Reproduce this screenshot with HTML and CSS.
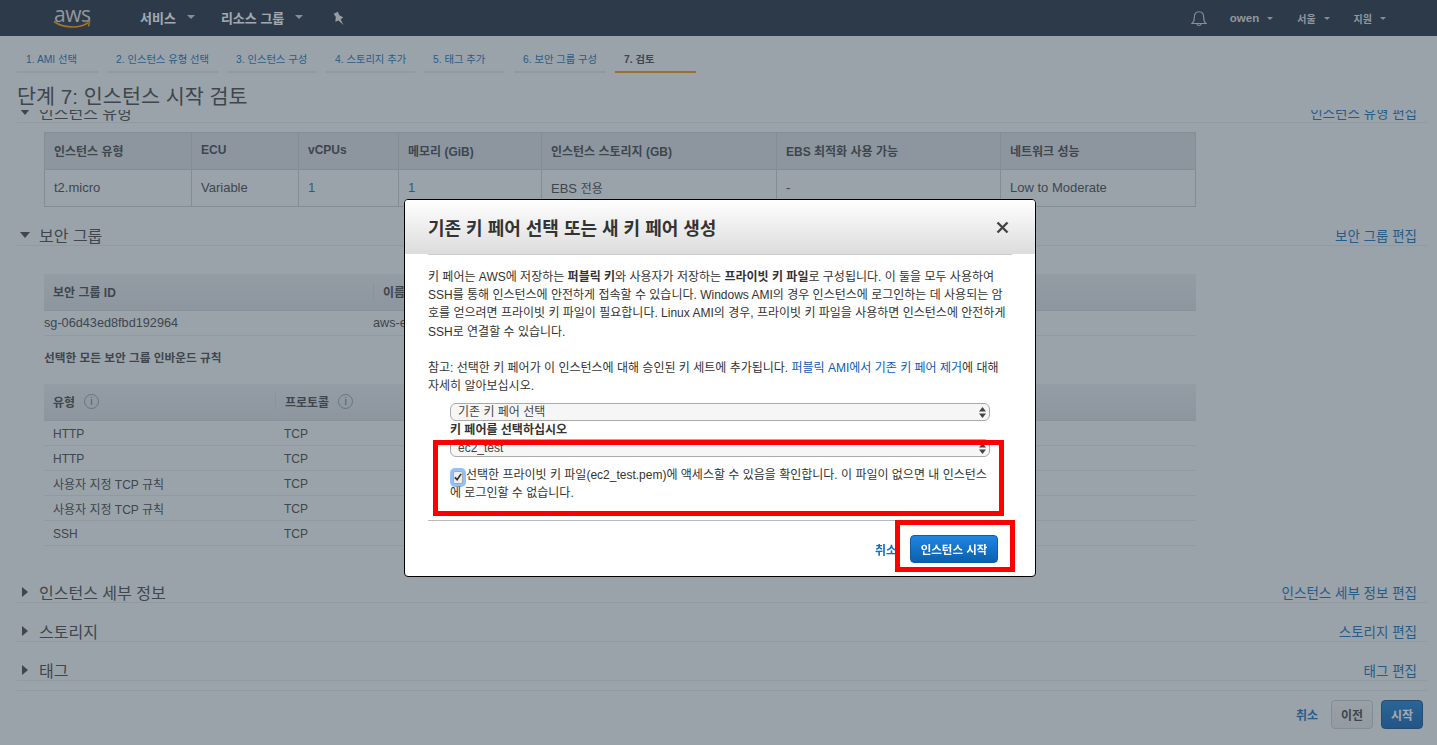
FILE: index.html
```html
<!DOCTYPE html>
<html lang="ko">
<head>
    <meta charset="UTF-8">
    <meta name="viewport" content="width=device-width, initial-scale=1.0">
    <title>인스턴스 시작 검토</title>
    <link rel="stylesheet" href="styles.css">
</head>
<body>
    <header class="nav">
        <div class="logo">
            <span class="logo-text">aws</span>
            <svg class="logo-smile" width="38" height="10" viewBox="0 0 38 10"><path d="M1 1.500C10 8 25 9 35 3" fill="none" stroke="#f90" stroke-width="1.700"/><path d="M30.500 1.500L36.500 1.200L35.500 6.500" fill="none" stroke="#f90" stroke-width="1.400"/></svg>
        </div>
        <a class="nav-item nav-services">서비스<i class="nav-caret"></i></a>
        <a class="nav-item nav-groups">리소스 그룹<i class="nav-caret"></i></a>
        <svg class="nav-pin" width="13" height="15" viewBox="0 0 12 14"><path d="M1.500 2.500L5.500 .8L6.500 3.800L10.500 6L8 7.800L10.500 13L6 8.800L3 10L3.500 5.500Z" fill="#e8e8e8"/></svg>
        <div class="nav-right">
            <svg class="nav-bell" width="16" height="17" viewBox="0 0 16 17"><path d="M1 13.500C3 12 3.300 10 3.300 7.500C3.300 4 5 1.700 8 1.700S12.700 4 12.700 7.500C12.700 10 13 12 15 13.500Z M6 14C6.300 16 9.700 16 10 14" fill="none" stroke="#ccc" stroke-width="1.100"/></svg>
            <a class="nav-sub nav-owen">owen<i class="nav-caret small"></i></a>
            <a class="nav-sub nav-seoul">서울<i class="nav-caret small"></i></a>
            <a class="nav-sub">지원<i class="nav-caret small"></i></a>
        </div>
    </header>

    <ul class="steps">
        <li class="step step-1">1. AMI 선택</li>
        <li class="step step-2">2. 인스턴스 유형 선택</li>
        <li class="step step-3">3. 인스턴스 구성</li>
        <li class="step step-4">4. 스토리지 추가</li>
        <li class="step step-5">5. 태그 추가</li>
        <li class="step step-6">6. 보안 그룹 구성</li>
        <li class="step step-7 active">7. 검토</li>
    </ul>

    <main class="page">
        <h1 class="page-title">단계 7: 인스턴스 시작 검토</h1>

        <section class="review first">
            <div class="review-head"><h2><i class="tri-down"></i>인스턴스 유형</h2><a>인스턴스 유형 편집</a></div>
            <table class="type-table">
                <colgroup><col class="c1"><col class="c2"><col class="c3"><col class="c4"><col class="c5"><col class="c6"><col></colgroup>
                <thead>
                    <tr><th>인스턴스 유형</th><th>ECU</th><th>vCPUs</th><th>메모리 (GiB)</th><th>인스턴스 스토리지 (GB)</th><th>EBS 최적화 사용 가능</th><th>네트워크 성능</th></tr>
                </thead>
                <tbody>
                    <tr><td>t2.micro</td><td>Variable</td><td class="num">1</td><td class="num">1</td><td>EBS <span class="ko">전용</span></td><td>-</td><td>Low to Moderate</td></tr>
                </tbody>
            </table>
        </section>

        <section class="review">
            <div class="review-head"><h2><i class="tri-down"></i>보안 그룹</h2><a>보안 그룹 편집</a></div>
            <div class="sg-block">
                <div class="sg-head"><span class="sg-id">보안 그룹 ID</span><span class="sg-name">이름</span></div>
                <div class="sg-row"><span class="sg-id">sg-06d43ed8fbd192964</span><span class="sg-name">aws-ec2</span></div>
                <h3 class="rules-title">선택한 모든 보안 그룹 인바운드 규칙</h3>
                <div class="sg-head"><span class="rule-type">유형<i class="info">i</i></span><span class="rule-proto">프로토콜<i class="info">i</i></span></div>
                <div class="rule-row"><span class="rule-type">HTTP</span><span class="rule-cell">TCP</span></div>
                <div class="rule-row"><span class="rule-type">HTTP</span><span class="rule-cell">TCP</span></div>
                <div class="rule-row"><span class="rule-type">사용자 지정 TCP 규칙</span><span class="rule-cell">TCP</span></div>
                <div class="rule-row"><span class="rule-type">사용자 지정 TCP 규칙</span><span class="rule-cell">TCP</span></div>
                <div class="rule-row"><span class="rule-type">SSH</span><span class="rule-cell">TCP</span></div>
            </div>
        </section>

        <section class="review collapsed first-collapsed">
            <div class="review-head"><h2><i class="tri-right"></i>인스턴스 세부 정보</h2><a>인스턴스 세부 정보 편집</a></div>
        </section>
        <section class="review collapsed">
            <div class="review-head"><h2><i class="tri-right"></i>스토리지</h2><a>스토리지 편집</a></div>
        </section>
        <section class="review collapsed">
            <div class="review-head"><h2><i class="tri-right"></i>태그</h2><a>태그 편집</a></div>
        </section>

        <div class="page-actions">
            <a class="cancel">취소</a>
            <button class="btn-prev">이전</button>
            <button class="btn-go">시작</button>
        </div>
    </main>

    <div class="backdrop"></div>

    <div class="modal">
        <div class="modal-head">
            <h2>기존 키 페어 선택 또는 새 키 페어 생성</h2>
            <svg class="modal-close" width="13" height="13" viewBox="0 0 13 13"><path d="M1.500 1.500L11.500 11.500M11.500 1.500L1.500 11.500" stroke="#444" stroke-width="2.400"/></svg>
        </div>
        <div class="modal-body">
            <p>키 페어는 AWS에 저장하는 <b>퍼블릭 키</b>와 사용자가 저장하는 <b>프라이빗 키 파일</b>로 구성됩니다. 이 둘을 모두 사용하여<br>SSH를 통해 인스턴스에 안전하게 접속할 수 있습니다. Windows AMI의 경우 인스턴스에 로그인하는 데 사용되는 암<br>호를 얻으려면 프라이빗 키 파일이 필요합니다. Linux AMI의 경우, 프라이빗 키 파일을 사용하면 인스턴스에 안전하게<br>SSH로 연결할 수 있습니다.<br><br>참고: 선택한 키 페어가 이 인스턴스에 대해 승인된 키 세트에 추가됩니다. <a>퍼블릭 AMI에서 기존 키 페어 제거</a>에 대해<br>자세히 알아보십시오.</p>
            <div class="key-form">
                <div class="fake-select">
                    <span>기존 키 페어 선택</span>
                    <svg width="7" height="11" viewBox="0 0 7 11"><path d="M3.500 0L7 4.500H0ZM0 6.500H7L3.500 11Z" fill="#444"/></svg>
                </div>
                <label class="key-label">키 페어를 선택하십시오</label>
                <div class="fake-select">
                    <span>ec2_test</span>
                    <svg width="7" height="11" viewBox="0 0 7 11"><path d="M3.500 0L7 4.500H0ZM0 6.500H7L3.500 11Z" fill="#444"/></svg>
                </div>
                <p class="ack"><span class="check"><svg width="8" height="8" viewBox="0 0 9 9"><path d="M1 5L3.500 7.500L8 1" fill="none" stroke="#333" stroke-width="1.900"/></svg></span>선택한 프라이빗 키 파일(ec2_test.pem)에 액세스할 수 있음을 확인합니다. 이 파일이 없으면 내 인스턴스<br>에 로그인할 수 없습니다.</p>
            </div>
        </div>
        <div class="modal-foot">
            <a class="modal-cancel">취소</a>
            <button class="modal-launch">인스턴스 시작</button>
        </div>
        <div class="mark mark-form"></div>
        <div class="mark mark-launch"></div>
    </div>
</body>
</html>
```

FILE: styles.css
```css
* {
    box-sizing: border-box;
}
html, body {
    height: 745px;
    overflow: hidden;
}
body {
    margin: 0;
    background: #f2f3f3;
    color: #444;
    font-family: "Liberation Sans", "Noto Sans CJK KR", sans-serif;
    font-size: 12px;
}
a {
    color: #146eb4;
}

/* top bar */
.nav {
    display: flex;
    align-items: center;
    height: 36px;
    background: #232f3e;
    color: #fff;
}
.logo {
    position: relative;
    width: 36px;
    height: 36px;
    margin-left: 54px;
}
.logo-text {
    display: block;
    font-family: "Open Sans", sans-serif;
    font-size: 21px;
    line-height: 24px;
    margin-top: 2px;
    color: #ddd;
    letter-spacing: -0.5px;
}
.logo-smile {
    position: absolute;
    left: -1px;
    top: 20px;
}
.nav-item {
    display: flex;
    align-items: center;
    padding-bottom: 2px;
    color: #fff;
    font-size: 13px;
    font-weight: bold;
}
.nav-services {
    margin-left: 50px;
}
.nav-groups {
    margin-left: 26px;
}
.nav-caret {
    width: 0;
    height: 0;
    margin-left: 11px;
    border-left: 4px solid transparent;
    border-right: 4px solid transparent;
    border-top: 4px solid #ccc;
}
.nav-caret.small {
    margin-left: 8px;
    border-left-width: 3px;
    border-right-width: 3px;
    border-top-width: 3px;
}
.nav-pin {
    margin-left: 29px;
}
.nav-right {
    display: flex;
    align-items: center;
    margin-left: auto;
    padding-right: 51px;
}
.nav-bell {
    margin-right: 23px;
}
.nav-sub {
    display: flex;
    align-items: center;
    color: #ddd;
    font-size: 10px;
    font-weight: bold;
}
.nav-owen {
    margin-right: 24px;
    font-size: 11.500px;
}
.nav-seoul {
    margin-right: 24px;
}

/* wizard steps */
.steps {
    display: flex;
    gap: 9px;
    height: 37px;
    margin: 0;
    padding: 0 0 0 17px;
    list-style: none;
}
.step {
    height: 37px;
    padding: 17px 0 0 9px;
    border-bottom: 2px solid #dfe2e2;
    color: #146eb4;
    font-size: 10.300px;
    line-height: 14px;
    white-space: nowrap;
}
.step-1 { width: 81px; }
.step-2 { width: 111px; }
.step-3 { width: 90px; }
.step-4 { width: 89px; }
.step-5 { width: 81px; }
.step-6 { width: 92px; }
.step-7 { width: 81px; }
.step.active {
    border-bottom-color: #ec9222;
    color: #444;
    font-weight: bold;
}

/* review sections */
.page {
    padding: 0 10px 0 17px;
}
.page-title {
    position: relative;
    z-index: 1;
    height: 37px;
    margin: 0;
    padding-top: 11px;
    background: #f2f3f3;
    font-size: 20.700px;
    font-weight: normal;
    line-height: 26px;
    color: #444;
}
.review.first {
    margin-top: -8px;
}
.review-head {
    display: flex;
    justify-content: space-between;
    align-items: center;
    height: 21px;
    padding: 0 10px 0 3px;
    border-bottom: 1px solid #dfe2e2;
}
.review-head h2 {
    display: flex;
    align-items: center;
    margin: 0;
    font-size: 16px;
    font-weight: normal;
    color: #444;
}
.review-head a {
    font-size: 13.500px;
}
.tri-down, .tri-right {
    display: block;
    width: 0;
    height: 0;
}
.tri-down {
    margin-right: 9px;
    border-left: 5px solid transparent;
    border-right: 5px solid transparent;
    border-top: 6px solid #444;
}
.tri-right {
    margin: 0 11px 0 2px;
    border-top: 5px solid transparent;
    border-bottom: 5px solid transparent;
    border-left: 6px solid #444;
}

.type-table {
    width: 1152px;
    margin: 9px 0 18px 27px;
    border-collapse: collapse;
    table-layout: fixed;
}
.type-table col.c1 { width: 147px; }
.type-table col.c2 { width: 107px; }
.type-table col.c3 { width: 100px; }
.type-table col.c4 { width: 143px; }
.type-table col.c5 { width: 235px; }
.type-table col.c6 { width: 224px; }
.type-table th, .type-table td {
    height: 37px;
    padding: 0 9px;
    border: 1px solid #c6cbcf;
    text-align: left;
    white-space: nowrap;
    font-size: 12px;
}
.type-table th {
    padding-bottom: 2px;
    background: #d8dcdf;
    color: #444;
}
.type-table td {
    padding-bottom: 2px;
    font-size: 13px;
}
.type-table td .ko {
    font-size: 12px;
}
.type-table td.num {
    color: #146eb4;
}

.sg-block {
    width: 1152px;
    margin: 28px 0 0 27px;
}
.sg-head {
    display: flex;
    align-items: center;
    height: 37px;
    padding-bottom: 2px;
    border-bottom: 1px solid #cfd3d6;
    background: linear-gradient(#e4e7e9, #d8dcdf);
    font-weight: bold;
}
.sg-head > span {
    padding-left: 9px;
}
.sg-id {
    width: 329px;
}
.sg-name {
    border-left: 1px solid #d2d6d8;
}
.sg-row {
    display: flex;
    align-items: center;
    height: 25px;
    border-bottom: 1px solid #dfe2e2;
    font-size: 12.700px;
}
.sg-row .sg-name {
    border-left: 0;
}
.rules-title {
    height: 48px;
    margin: 0;
    padding-top: 13px;
    font-size: 11.700px;
    line-height: 18px;
    color: #444;
}
.rule-type {
    display: flex;
    align-items: center;
    width: 231px;
}
.rule-proto {
    display: flex;
    align-items: center;
    border-left: 1px solid #d2d6d8;
}
.rule-row {
    display: flex;
    align-items: center;
    height: 25px;
    padding-top: 1px;
    border-bottom: 1px solid #dfe2e2;
}
.rule-row .rule-type {
    padding-left: 9px;
    font-weight: normal;
}
.rule-cell {
    padding-left: 9px;
}
.info {
    display: block;
    width: 15px;
    height: 15px;
    margin-left: 9px;
    border: 1px solid #999;
    border-radius: 50%;
    color: #777;
    font-family: "Liberation Sans", sans-serif;
    font-size: 11px;
    font-style: normal;
    font-weight: normal;
    line-height: 13px;
    text-align: center;
}

.first-collapsed {
    margin-top: 36px;
}
.collapsed + .collapsed {
    margin-top: 18px;
}
.page-actions {
    display: flex;
    justify-content: flex-end;
    align-items: center;
    gap: 8px;
    margin-top: 9px;
    padding: 9px 4px 0 0;
    border-top: 1px solid #dfe2e2;
}
.cancel {
    margin-right: 5px;
    font-weight: bold;
}
.btn-prev, .btn-go {
    width: 42px;
    height: 29px;
    padding: 0;
    border-radius: 4px;
    font-family: inherit;
    font-size: 12px;
    font-weight: bold;
}
.btn-prev {
    border: 1px solid #c5c8cb;
    background: linear-gradient(#eee, #e2e3e5);
    color: #444;
}
.btn-go {
    border: 1px solid #15508a;
    background: linear-gradient(#1f7ed0, #0f62ae);
    color: #fff;
}

/* dim layer and key pair dialog */
.backdrop {
    position: fixed;
    z-index: 10;
    inset: 0;
    background: rgba(58, 72, 88, 0.47);
}
.modal {
    position: absolute;
    z-index: 11;
    left: 404px;
    top: 199px;
    width: 632px;
    height: 378px;
    border: 1px solid #000;
    border-radius: 4px;
    background: #fff;
    color: #333;
}
.modal-head {
    display: flex;
    justify-content: space-between;
    align-items: center;
    height: 54px;
    padding: 0 26px 0 23px;
    border-radius: 3px 3px 0 0;
    background: linear-gradient(#fff, #dcdcdc);
}
.modal-head h2 {
    margin: 0;
    font-size: 18px;
    font-weight: bold;
    color: #333;
}
.modal-body {
    margin: 0 23px;
    padding-top: 12px;
    border-top: 1px solid #ccc;
}
.modal-body p {
    margin: 0;
    line-height: 18.200px;
    white-space: nowrap;
}
.modal-body p:first-child {
    margin-top: 1px;
}
.modal-body a {
    color: #0a5cb8;
}
.key-form {
    margin: 8px 0 0 22px;
}
.fake-select {
    display: flex;
    justify-content: space-between;
    align-items: center;
    width: 540px;
    height: 18px;
    padding: 0 3px 0 7px;
    border: 1px solid #aaa;
    border-radius: 6px;
    background: #f6f6f6;
    color: #444;
    line-height: 16px;
}
.key-label {
    display: block;
    height: 18px;
    font-weight: bold;
    line-height: 18px;
}
.key-form p.ack {
    display: block;
    margin: 10px 0 0;
    line-height: 17.500px;
}
.check {
    display: inline-flex;
    justify-content: center;
    align-items: center;
    width: 10px;
    height: 13px;
    margin: 0 3px 0 3px;
    border: 1px solid #aaa;
    border-radius: 2px;
    background: #eee;
    box-shadow: 0 0 0 3px #94c0f5;
    vertical-align: -2px;
}
.modal-foot {
    position: absolute;
    left: 23px;
    right: 23px;
    top: 320px;
    display: flex;
    justify-content: flex-end;
    align-items: center;
    gap: 13px;
    height: 57px;
    padding: 0 14px 0 0;
    border-top: 1px solid #bbb;
}
.modal-cancel {
    color: #0a6ed1;
    font-weight: bold;
}
.modal-launch {
    width: 88px;
    height: 28px;
    padding: 0;
    border: 1px solid #0f5ca8;
    border-radius: 4px;
    background: linear-gradient(#1f86e0, #0b5fb0);
    color: #fff;
    font-family: inherit;
    font-size: 11.500px;
    font-weight: bold;
}
.mark {
    position: absolute;
    border: 5px solid #f00;
}
.mark-form {
    left: 28px;
    top: 240px;
    width: 571px;
    height: 76px;
}
.mark-launch {
    left: 490px;
    top: 320px;
    width: 120px;
    height: 52px;
}
```
